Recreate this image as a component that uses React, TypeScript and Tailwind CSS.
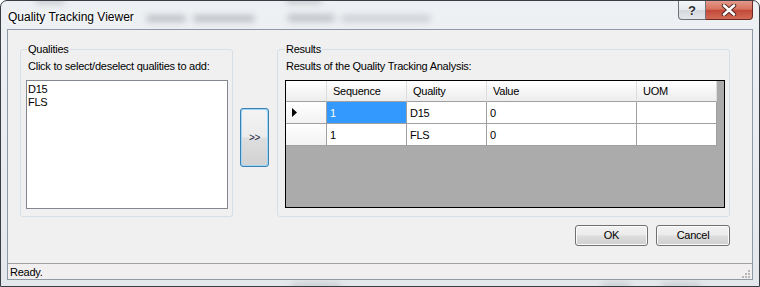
import type { ReactNode } from 'react'

function WinButton({ children, className }: { children: ReactNode; className?: string }) {
  return (
    <button
      className={
        'flex items-center justify-center rounded-[3px] border border-[#707070] bg-[linear-gradient(to_bottom,#f2f2f2_0%,#ebebeb_48%,#dddddd_52%,#cfcfcf_100%)] text-[11px] leading-[13px] text-black shadow-[inset_0_0_0_1px_#fbfbfb] ' +
        (className ?? '')
      }
    >
      {children}
    </button>
  )
}

function HeaderCell({ label, className }: { label?: string; className?: string }) {
  return (
    <div
      className={
        'h-[21px] border-r border-b border-r-[#dcdcdc] border-b-[#a0a0a0] bg-linear-to-b from-white to-[#ededed] pl-[6px] pt-[4px] leading-[13px] ' +
        (className ?? '')
      }
    >
      {label}
    </div>
  )
}

function Cell({ text, selected, className }: { text?: string; selected?: boolean; className?: string }) {
  return (
    <div
      className={
        'h-[22px] border-r border-b border-[#a0a0a0] pl-[3px] pt-[5px] leading-[13px] ' +
        (selected ? 'bg-[#3399ff] text-white ' : 'bg-white ') +
        (className ?? '')
      }
    >
      {text}
    </div>
  )
}

const rows = [
  { seq: '1', quality: 'D15', value: '0', uom: '', current: true },
  { seq: '1', quality: 'FLS', value: '0', uom: '', current: false },
]

export default function App() {
  return (
    <div className="relative h-[287px] w-[760px] overflow-hidden bg-white">
      <div className="relative flex h-[287px] w-[760px] flex-col rounded-t-[7px] border border-[#3a3e44] bg-linear-to-b from-[#eef1f4] to-[#e4e8ec] font-['Liberation_Sans',Arial,sans-serif] text-[11px] text-black">
        {/* glass frame: blurred shapes of whatever is behind the window */}
        <div className="pointer-events-none absolute inset-0 overflow-hidden">
          <div className="absolute left-[34px] top-[-3px] h-[6px] w-[30px] rounded-full bg-[#9aa0a6] blur-[3px] opacity-50" />
          <div className="absolute left-[285px] top-[-3px] h-[6px] w-[36px] rounded-full bg-[#9aa0a6] blur-[3px] opacity-50" />
          <div className="absolute left-[145px] top-[14px] h-[7px] w-[40px] rounded-full bg-[#8d9399] blur-[3px] opacity-50" />
          <div className="absolute left-[192px] top-[14px] h-[7px] w-[62px] rounded-full bg-[#8d9399] blur-[3px] opacity-50" />
          <div className="absolute left-[286px] top-[13px] h-[8px] w-[48px] rounded-full bg-[#8d9399] blur-[3px] opacity-45" />
          <div className="absolute left-[340px] top-[14px] h-[7px] w-[90px] rounded-full bg-[#8d9399] blur-[3px] opacity-35" />
          <div className="absolute left-[290px] top-[282px] h-[6px] w-[50px] rounded-full bg-[#9aa0a6] blur-[3px] opacity-40" />
          <div className="absolute left-[600px] top-[282px] h-[6px] w-[30px] rounded-full bg-[#9aa0a6] blur-[3px] opacity-40" />
          <div className="absolute left-[660px] top-[282px] h-[6px] w-[40px] rounded-full bg-[#9aa0a6] blur-[3px] opacity-40" />
        </div>

        {/* title bar */}
        <div className="relative flex h-[28px] shrink-0">
          <span className="pl-[7px] pt-[9px] text-[12px] leading-[14px] text-black [text-shadow:0_0_6px_#ffffff,0_0_3px_#ffffff]">
            Quality Tracking Viewer
          </span>
          <div className="ml-auto mr-[6px] flex h-[19px]">
            <div className="flex w-[28px] items-center justify-center rounded-bl-[4px] border border-t-0 border-[#6d7178] bg-[linear-gradient(to_bottom,#f4f6f8_0%,#e6e9ec_50%,#d4d8dd_52%,#e4e7ea_100%)] text-[13px] font-bold leading-none text-[#2a2d31] [text-shadow:0_0_2px_#ffffff]">
              ?
            </div>
            <div className="flex w-[47px] items-center justify-center rounded-br-[4px] border border-t-0 border-l-0 border-[#6a2a22] bg-[linear-gradient(to_bottom,#e3998a_0%,#d7735f_45%,#c4493a_52%,#d26a55_100%)]">
              <svg width="16" height="12" viewBox="0 0 16 12">
                <path d="M3 1.5 L13 10.5 M13 1.5 L3 10.5" stroke="#4a211a" strokeWidth="4.4" strokeLinecap="round" fill="none" />
                <path d="M3 1.5 L13 10.5 M13 1.5 L3 10.5" stroke="#ffffff" strokeWidth="2.6" strokeLinecap="round" fill="none" />
              </svg>
            </div>
          </div>
        </div>

        {/* client area */}
        <div className="relative mx-[6px] flex h-[251px] shrink-0 flex-col border border-[#8e99a5] bg-[#f0f0f0] tracking-[-0.25px]">
          <div className="ml-[12px] mt-[13px] flex items-start">
            <fieldset className="h-[174px] w-[213px] rounded-[3px] border border-[#d5dfe5] pb-[7px] pl-[5px] pr-[4px]">
              <legend className="ml-[1px] px-[1px] leading-[13px]">Qualities</legend>
              <div className="ml-[2px] mt-[4px] leading-[13px]">Click to select/deselect qualities to add:</div>
              <div className="mt-[7px] h-[129px] w-[202px] border border-[#828790] bg-white pl-[1px] pt-[2px] leading-[13px]">
                <div>D15</div>
                <div>FLS</div>
              </div>
            </fieldset>

            <div className="ml-[7px] mt-[65px] flex h-[59px] w-[29px] items-center justify-center rounded-[3px] border border-[#3c7fb1] bg-[#9fd5f5]">
              <div className="flex h-[55px] w-[25px] items-center justify-center rounded-[2px] bg-[linear-gradient(to_bottom,#f3f3f3_0%,#ececec_48%,#dedede_52%,#d2d2d2_100%)] text-[10px] leading-none text-[#1a1a40]">
                &gt;&gt;
              </div>
            </div>

            <fieldset className="ml-[8px] h-[174px] w-[453px] rounded-[3px] border border-[#d5dfe5] pb-[7px] pl-[7px] pr-[4px]">
              <legend className="px-[1px] leading-[13px]">Results</legend>
              <div className="ml-[1px] mt-[4px] leading-[13px]">Results of the Quality Tracking Analysis:</div>
              <div className="mt-[7px] h-[128px] w-[440px] border border-black bg-[#ababab]">
                <div className="flex">
                  <HeaderCell className="w-[41px] border-r-[#a0a0a0]" />
                  <HeaderCell className="w-[80px]" label="Sequence" />
                  <HeaderCell className="w-[80px]" label="Quality" />
                  <HeaderCell className="w-[150px]" label="Value" />
                  <HeaderCell className="w-[80px]" label="UOM" />
                </div>
                {rows.map((r, i) => (
                  <div key={i} className="flex">
                    <div className="flex h-[22px] w-[41px] items-center border-r border-b border-[#a0a0a0] bg-linear-to-b from-white to-[#f2f2f2] pl-[6px]">
                      {r.current && (
                        <svg width="5" height="9" viewBox="0 0 5 9">
                          <path d="M0 0 L5 4.5 L0 9 Z" fill="#000000" />
                        </svg>
                      )}
                    </div>
                    <Cell className="w-[80px]" text={r.seq} selected={r.current} />
                    <Cell className="w-[80px]" text={r.quality} />
                    <Cell className="w-[150px]" text={r.value} />
                    <Cell className="w-[80px]" text={r.uom} />
                  </div>
                ))}
              </div>
            </fieldset>
          </div>

          <div className="mr-[22px] mt-[8px] flex justify-end gap-[8px]">
            <WinButton className="h-[21px] w-[73px]">OK</WinButton>
            <WinButton className="h-[21px] w-[74px]">Cancel</WinButton>
          </div>

          {/* status bar */}
          <div className="mt-auto flex h-[16px] items-start border-t border-[#a0a0a0] bg-[#f1efef] pl-[2px] pt-[2px] leading-[13px]">
            <span>Ready.</span>
            <svg className="ml-auto mr-[1px] mt-[3px]" width="10" height="10" viewBox="0 0 10 10">
              <g fill="#b8b8b8">
                <rect x="7" y="1" width="2" height="2" />
                <rect x="4" y="4" width="2" height="2" />
                <rect x="7" y="4" width="2" height="2" />
                <rect x="1" y="7" width="2" height="2" />
                <rect x="4" y="7" width="2" height="2" />
                <rect x="7" y="7" width="2" height="2" />
              </g>
            </svg>
          </div>
        </div>
      </div>
    </div>
  )
}
